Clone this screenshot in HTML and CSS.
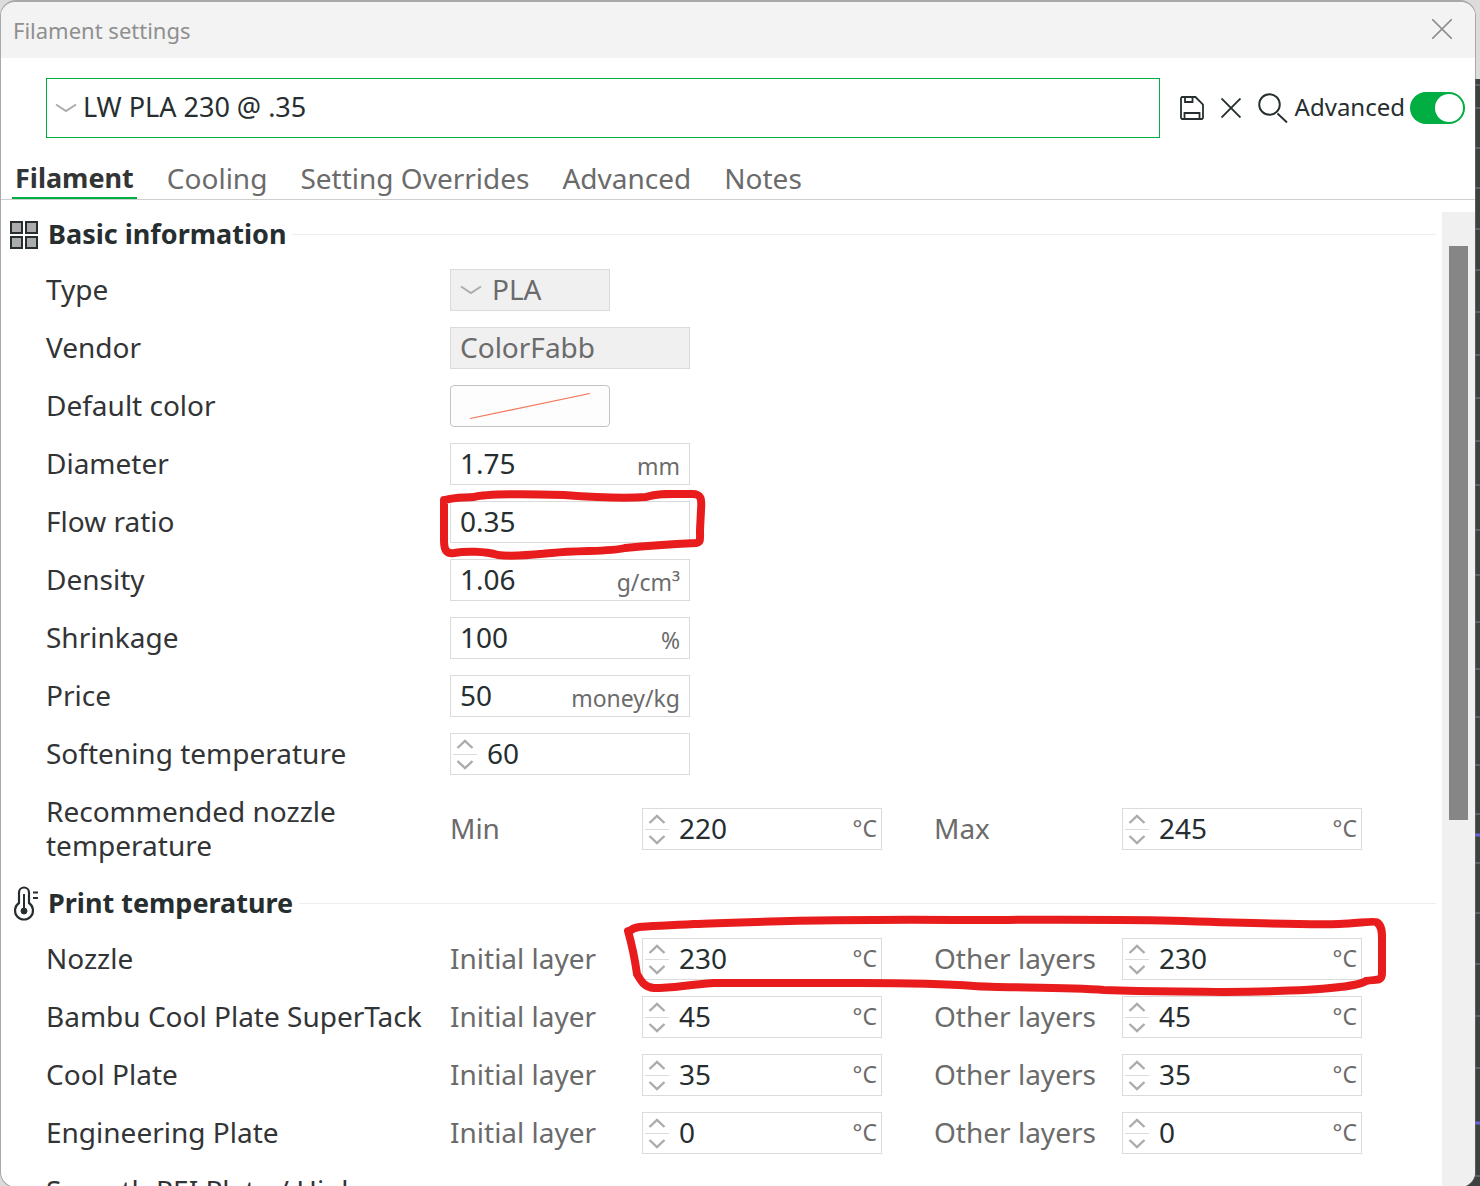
FILE: index.html
```html
<!DOCTYPE html>
<html lang="en">
<head>
<meta charset="utf-8">
<title>Filament settings</title>
<link rel="stylesheet" href="styles.css">
</head>
<body>
<svg class="defs" aria-hidden="true">
  <symbol id="chevron" viewBox="0 0 22 10"><path d="M1 1.5 11 8 21 1.5" fill="none" stroke="#acacac" stroke-width="2"/></symbol>
  <symbol id="up" viewBox="0 0 18 10"><path d="M1.5 9 9 1.8 16.5 9" fill="none" stroke="#acacac" stroke-width="2.4"/></symbol>
  <symbol id="down" viewBox="0 0 18 10"><path d="M1.5 1 9 8.2 16.5 1" fill="none" stroke="#acacac" stroke-width="2.4"/></symbol>
</svg>
<svg class="scene" viewBox="0 0 20 1186" preserveAspectRatio="xMaxYMin slice" aria-hidden="true">
  <path fill="#3d4140" d="M0 79h20v1107H0z"/>
  <path stroke="#6b6e6d" stroke-width="1.5" d="M0 85h20M0 108h20M0 148h20M0 188h20M0 229h20M0 270h20M0 312h20M0 355h20M0 398h20M0 441h20M0 485h20M0 530h20M0 575h20M0 622h20M0 669h20M0 717h20M0 765h20M0 814h20M0 863h20M0 913h20M0 964h20M0 1016h20M0 1068h20M0 1176h20"/>
  <path stroke="#6464d8" stroke-width="3" d="M0 835h20M0 1123h20"/>
</svg>
<main class="dialog">
  <header class="titlebar">
    <h1 class="title">Filament settings</h1>
    <button class="icon-button" type="button" aria-label="Close">
      <svg width="20" height="20" viewBox="0 0 20 20"><path d="M0 0 20 20M20 0 0 20" stroke="#8f8f8f" stroke-width="1.6"/></svg>
    </button>
  </header>

  <div class="toolbar">
    <div class="preset">
      <svg class="chevron" width="22" height="10"><use href="#chevron"/></svg>
      <select class="preset-select" aria-label="Preset"><option>LW PLA 230 @ .35</option></select>
    </div>
    <div class="tools">
      <button class="icon-button" type="button" aria-label="Save">
        <svg width="24" height="24" viewBox="0 0 24 24" fill="none" stroke="#262e30" stroke-width="1.8"><path d="M2 1h13.500L23 8.500V22l-1 1H2l-1-1V2zM5 1v5h7.500V1M4.500 23v-6h15v6"/></svg>
      </button>
      <button class="icon-button" type="button" aria-label="Delete">
        <svg width="20" height="20" viewBox="0 0 20 20"><path d="M.5 .5 19.500 19.500M19.500 .5 .5 19.500" stroke="#262e30" stroke-width="1.9"/></svg>
      </button>
      <button class="icon-button" type="button" aria-label="Search">
        <svg width="30" height="30" viewBox="0 0 30 30" fill="none" stroke="#262e30" stroke-width="1.9"><circle cx="11.500" cy="11.500" r="10.300"/><path d="M19.500 20.500 29 29.500"/></svg>
      </button>
    </div>
    <label class="mode"><span class="mode-text">Advanced</span> <input class="toggle" type="checkbox" role="switch" checked></label>
  </div>

  <nav class="tabs">
    <a class="tab tab-active" href="#filament">Filament</a>
    <a class="tab" href="#cooling">Cooling</a>
    <a class="tab" href="#overrides">Setting Overrides</a>
    <a class="tab" href="#advanced">Advanced</a>
    <a class="tab" href="#notes">Notes</a>
  </nav>

  <div class="body">
    <div class="content" id="filament">
      <section>
        <h2 class="heading">
          <svg class="heading-icon" width="28" height="28" viewBox="0 0 28 28" fill="#acacac" stroke="#262e30" stroke-width="2"><path d="M1 1h11v11H1zM16 1h11v11H16zM1 16h11v11H1zM16 16h11v11H16z"/></svg>
          <span class="heading-text">Basic information</span>
        </h2>
        <div class="row">
          <label class="name" for="type">Type</label>
          <div class="field field-short field-off">
            <svg class="chevron" width="22" height="10"><use href="#chevron"/></svg>
            <select class="value" id="type" disabled><option>PLA</option></select>
          </div>
        </div>
        <div class="row">
          <label class="name" for="vendor">Vendor</label>
          <div class="field field-off"><input class="value" id="vendor" type="text" value="ColorFabb" disabled></div>
        </div>
        <div class="row">
          <label class="name" for="color">Default color</label>
          <button class="swatch" id="color" type="button" aria-label="No color">
            <svg width="120" height="26" viewBox="0 0 120 26"><path d="M0 25.500 120 .5" stroke="#f2785a" stroke-width="1.200"/></svg>
          </button>
        </div>
        <div class="row">
          <label class="name" for="diameter">Diameter</label>
          <div class="field"><input class="value" id="diameter" type="text" value="1.75"><span class="unit">mm</span></div>
        </div>
        <div class="row">
          <label class="name" for="flow">Flow ratio</label>
          <div class="field">
            <input class="value" id="flow" type="text" value="0.35">
            <svg class="mark mark-flow" width="268" height="72" viewBox="0 0 268 72"><path d="M5 10C15 7 25 8 34 7 45 4 90 4 124 5 150 7 180 9 206 7 218 3 230 4 252 4 261 4 262 8 261 20L260 40C260 50 261 52 256 53 235 54 205 56 185 58 170 62 140 60 112 63 90 65 75 67 58 65 45 61 25 61 14 63 6 64 4 60 4 50V10"/></svg>
          </div>
        </div>
        <div class="row">
          <label class="name" for="density">Density</label>
          <div class="field"><input class="value" id="density" type="text" value="1.06"><span class="unit">g/cm³</span></div>
        </div>
        <div class="row">
          <label class="name" for="shrinkage">Shrinkage</label>
          <div class="field"><input class="value" id="shrinkage" type="text" value="100"><span class="unit">%</span></div>
        </div>
        <div class="row">
          <label class="name" for="price">Price</label>
          <div class="field"><input class="value" id="price" type="text" value="50"><span class="unit">money/kg</span></div>
        </div>
        <div class="row">
          <label class="name" for="softening">Softening temperature</label>
          <div class="field">
            <span class="spin"><button class="step" type="button" aria-label="Increase"><svg width="18" height="10"><use href="#up"/></svg></button><button class="step" type="button" aria-label="Decrease"><svg width="18" height="10"><use href="#down"/></svg></button></span>
            <input class="value" id="softening" type="text" value="60">
          </div>
        </div>
        <div class="row">
          <span class="name">Recommended nozzle temperature</span>
          <label class="sub" for="rec-min">Min</label>
          <div class="field">
            <span class="spin"><button class="step" type="button" aria-label="Increase"><svg width="18" height="10"><use href="#up"/></svg></button><button class="step" type="button" aria-label="Decrease"><svg width="18" height="10"><use href="#down"/></svg></button></span>
            <input class="value" id="rec-min" type="text" value="220"><span class="degree">°C</span>
          </div>
          <label class="sub sub-second" for="rec-max">Max</label>
          <div class="field">
            <span class="spin"><button class="step" type="button" aria-label="Increase"><svg width="18" height="10"><use href="#up"/></svg></button><button class="step" type="button" aria-label="Decrease"><svg width="18" height="10"><use href="#down"/></svg></button></span>
            <input class="value" id="rec-max" type="text" value="245"><span class="degree">°C</span>
          </div>
        </div>
      </section>

      <section>
        <h2 class="heading">
          <svg class="heading-icon" width="28" height="36" viewBox="0 0 28 36" fill="none" stroke="#262e30" stroke-width="2.2"><path d="M9 17V6.500a5 5 0 0 1 10 0V17a9 9 0 1 1-10 0z"/><path d="M14 8v17" stroke-width="2"/><circle cx="14" cy="25" r="3" fill="#262e30" stroke-width="1"/><path d="M23 6.500h5M23 12h5"/></svg>
          <span class="heading-text">Print temperature</span>
        </h2>
        <div class="row">
          <span class="name">Nozzle</span>
          <label class="sub" for="nozzle-a">Initial layer</label>
          <div class="field">
            <span class="spin"><button class="step" type="button" aria-label="Increase"><svg width="18" height="10"><use href="#up"/></svg></button><button class="step" type="button" aria-label="Decrease"><svg width="18" height="10"><use href="#down"/></svg></button></span>
            <input class="value" id="nozzle-a" type="text" value="230"><span class="degree">°C</span>
            <svg class="mark mark-nozzle" width="764" height="82" viewBox="0 0 764 82"><path d="M6 16C12 10 22 12 70 9 130 7 190 4 330 5 400 5 500 4 560 6 620 8 680 10 715 9 735 8 750 6 752 7 759 10 758 20 758 28V58C758 67 752 64 742 66 735 71 700 74 680 75 650 76 640 77 600 77 560 76 530 77 480 75 440 72 380 73 350 71 300 67 240 68 200 68H90C60 70 50 73 30 73 20 72 17 66 13 59 11 45 8 30 4 16"/></svg>
          </div>
          <label class="sub sub-second" for="nozzle-b">Other layers</label>
          <div class="field">
            <span class="spin"><button class="step" type="button" aria-label="Increase"><svg width="18" height="10"><use href="#up"/></svg></button><button class="step" type="button" aria-label="Decrease"><svg width="18" height="10"><use href="#down"/></svg></button></span>
            <input class="value" id="nozzle-b" type="text" value="230"><span class="degree">°C</span>
          </div>
        </div>
        <div class="row">
          <span class="name">Bambu Cool Plate SuperTack</span>
          <label class="sub" for="super-a">Initial layer</label>
          <div class="field">
            <span class="spin"><button class="step" type="button" aria-label="Increase"><svg width="18" height="10"><use href="#up"/></svg></button><button class="step" type="button" aria-label="Decrease"><svg width="18" height="10"><use href="#down"/></svg></button></span>
            <input class="value" id="super-a" type="text" value="45"><span class="degree">°C</span>
          </div>
          <label class="sub sub-second" for="super-b">Other layers</label>
          <div class="field">
            <span class="spin"><button class="step" type="button" aria-label="Increase"><svg width="18" height="10"><use href="#up"/></svg></button><button class="step" type="button" aria-label="Decrease"><svg width="18" height="10"><use href="#down"/></svg></button></span>
            <input class="value" id="super-b" type="text" value="45"><span class="degree">°C</span>
          </div>
        </div>
        <div class="row">
          <span class="name">Cool Plate</span>
          <label class="sub" for="cool-a">Initial layer</label>
          <div class="field">
            <span class="spin"><button class="step" type="button" aria-label="Increase"><svg width="18" height="10"><use href="#up"/></svg></button><button class="step" type="button" aria-label="Decrease"><svg width="18" height="10"><use href="#down"/></svg></button></span>
            <input class="value" id="cool-a" type="text" value="35"><span class="degree">°C</span>
          </div>
          <label class="sub sub-second" for="cool-b">Other layers</label>
          <div class="field">
            <span class="spin"><button class="step" type="button" aria-label="Increase"><svg width="18" height="10"><use href="#up"/></svg></button><button class="step" type="button" aria-label="Decrease"><svg width="18" height="10"><use href="#down"/></svg></button></span>
            <input class="value" id="cool-b" type="text" value="35"><span class="degree">°C</span>
          </div>
        </div>
        <div class="row">
          <span class="name">Engineering Plate</span>
          <label class="sub" for="eng-a">Initial layer</label>
          <div class="field">
            <span class="spin"><button class="step" type="button" aria-label="Increase"><svg width="18" height="10"><use href="#up"/></svg></button><button class="step" type="button" aria-label="Decrease"><svg width="18" height="10"><use href="#down"/></svg></button></span>
            <input class="value" id="eng-a" type="text" value="0"><span class="degree">°C</span>
          </div>
          <label class="sub sub-second" for="eng-b">Other layers</label>
          <div class="field">
            <span class="spin"><button class="step" type="button" aria-label="Increase"><svg width="18" height="10"><use href="#up"/></svg></button><button class="step" type="button" aria-label="Decrease"><svg width="18" height="10"><use href="#down"/></svg></button></span>
            <input class="value" id="eng-b" type="text" value="0"><span class="degree">°C</span>
          </div>
        </div>
        <div class="row">
          <span class="name">Smooth PEI Plate / High</span>
        </div>
      </section>
    </div>
    <div class="scrollbar"><div class="thumb"></div></div>
  </div>
</main>
</body>
</html>
```
FILE: styles.css
```css
* { box-sizing: border-box; }

body {
  margin: 0;
  height: 100vh;
  overflow: hidden;
  position: relative;
  background: #dcdcdc;
  color: #323436;
  font: 28px/34px "Noto Sans", "Open Sans", sans-serif;
}

svg { display: block; flex: none; }
.defs { position: absolute; width: 0; height: 0; }
.scene { position: absolute; top: 0; right: 0; width: 20px; height: 100%; }

button, input, select {
  margin: 0;
  padding: 0;
  border: 0;
  background: none;
  color: inherit;
  font: inherit;
}

.dialog {
  position: relative;
  display: flex;
  flex-direction: column;
  height: calc(100vh + 2px);
  margin-right: 4px;
  overflow: hidden;
  border: 1px solid rgba(118, 118, 118, 0.5);
  border-top-width: 2px;
  border-radius: 16px;
  background: #fff;
  background-clip: padding-box;
}

.titlebar {
  flex: none;
  display: flex;
  align-items: center;
  justify-content: space-between;
  height: 56px;
  padding: 0 23px 2px 12px;
  background: #f3f3f3;
}
.title { margin: 0; padding-top: 2px; color: #8f8f8f; font-size: 22px; font-weight: 400; }
.icon-button { display: flex; }

.toolbar {
  flex: none;
  display: flex;
  align-items: center;
  padding: 20px 10px 20px 45px;
}
.preset {
  flex: 1;
  display: flex;
  align-items: center;
  gap: 6px;
  height: 60px;
  padding-left: 8px;
  border: 1px solid #00ae42;
  color: #262e30;
}
.preset-select { flex: 1; padding-bottom: 2px; appearance: none; font-size: 27px; }
.tools { display: flex; align-items: center; gap: 17px; padding: 0 7px 0 20px; }
.mode { display: flex; align-items: center; gap: 5px; color: #262e30; font-size: 24px; }
.mode-text { padding-bottom: 2px; }
.toggle {
  appearance: none;
  display: flex;
  justify-content: flex-end;
  width: 55px;
  height: 32px;
  padding: 2px;
  border-radius: 16px;
  background: #00ae42;
}
.toggle::before { content: ""; width: 28px; height: 28px; border-radius: 50%; background: #fff; }

.tabs {
  flex: none;
  display: flex;
  gap: 27px;
  height: 42px;
  padding-left: 11px;
  border-bottom: 1px solid #cecece;
}
.tab { padding: 3px 3px 0; color: #6b6b6b; text-decoration: none; }
.tab-active { border-bottom: 2px solid #00ae42; color: #323436; font-size: 27px; font-weight: 700; }

.body { flex: 1; min-height: 0; display: flex; }
.content { flex: 1; overflow: hidden; padding: 6px 6px 0 9px; }

.heading {
  display: flex;
  align-items: center;
  gap: 10px;
  height: 55px;
  margin: 0;
  padding-top: 2px;
  color: #262e30;
  font-size: 27px;
}
.heading-text { padding-bottom: 2px; }
.heading::after { content: ""; flex: 1; height: 1px; margin-left: -4px; background: #eee; }

.row { display: flex; align-items: center; min-height: 58px; padding: 11px 0 13px 36px; }
.name { flex: none; width: 404px; }
.sub { flex: none; width: 192px; color: #6b6b6b; }
.sub-second { width: 240px; padding-left: 52px; }

.field {
  position: relative;
  flex: none;
  display: flex;
  align-items: center;
  width: 240px;
  height: 42px;
  margin: -3px 0 -5px;
  padding: 0 9px;
  border: 1px solid #dbdbdb;
  background: #fff;
  color: #262e30;
}
.field-short { width: 160px; gap: 10px; }
.field-off { background: #f0f0f0; color: #6b6b6b; }
.value { flex: 1; min-width: 0; height: 40px; padding-bottom: 2px; appearance: none; }
.value:disabled { opacity: 1; color: #6b6b6b; }
.unit { padding-top: 4px; color: #6b6b6b; font-size: 23px; }
.degree { margin-right: -5px; padding-bottom: 2px; color: #6b6b6b; font-size: 23px; }

.spin { width: 24px; height: 40px; margin: 0 10px 0 -7px; }
.step { display: flex; align-items: center; justify-content: center; width: 24px; height: 20px; }
.step + .step { border-top: 1px solid #dbdbdb; }

.swatch {
  display: flex;
  align-items: center;
  justify-content: center;
  width: 160px;
  height: 42px;
  margin: -3px 0 -5px;
  border: 1px solid #c4c4c4;
  border-radius: 4px;
  background: #fdfdfd;
}

.mark { position: absolute; z-index: 1; fill: none; stroke: #e81c1c; stroke-width: 8; stroke-linecap: round; pointer-events: none; }
.mark-flow { left: -11px; top: -12px; }
.mark-nozzle { left: -19px; top: -24px; }

.scrollbar { flex: none; width: 33px; margin-top: 12px; padding: 34px 7px 0; background: #f0f0f0; }
.thumb { height: 61%; background: #868686; }
```
